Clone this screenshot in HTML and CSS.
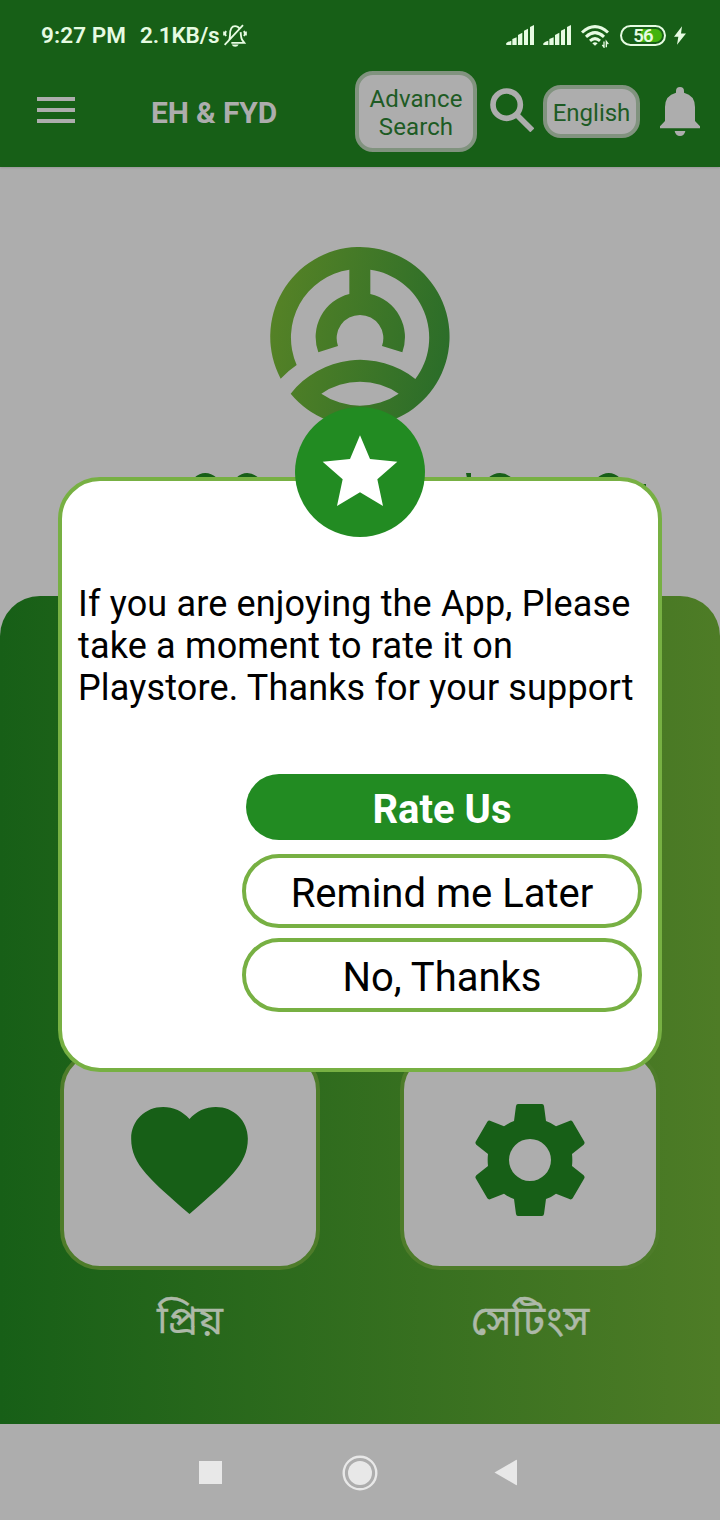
FILE: index.html
```html
<!DOCTYPE html>
<html lang="bn">
<head>
<meta charset="utf-8">
<title>EH &amp; FYD</title>
<link rel="stylesheet" href="styles.css">
</head>
<body>
<div class="screen">
  <header class="header">
    <div class="status">
      <span class="status-time">9:27 PM</span>
      <span class="status-speed">2.1KB/s</span>
      <svg class="icon-mute" viewBox="0 0 72 68" width="24" height="23" fill="none" stroke="currentColor" stroke-width="5.500">
        <path d="M15 52q6-6 6-19Q21 6 36 6q9 0 13 7M53 24q1 19 5 24l6 8H25M5 62 60 3"/>
        <path d="M9 20q-4 8 0 16M3 22v12M63 20q4 8 0 16M69 22v12" stroke-width="5"/>
        <path d="M26 61h21q-3 7-10.500 7T26 61Z" fill="currentColor" stroke="none"/>
      </svg>
      <span class="status-gap"></span>
      <svg class="icon-signal" viewBox="0 0 84 60" width="28" height="20" fill="currentColor"><path d="M0 58q0-6 16-11v13H2ZM19 42l13-5v23H19ZM36 30l13-7v37H36ZM54 17l12-6v49H54ZM72 6l12-6v60H72Z"/></svg>
      <svg class="icon-signal" viewBox="0 0 84 60" width="28" height="20" fill="currentColor"><path d="M0 58q0-6 16-11v13H2ZM19 42l13-5v23H19ZM36 30l13-7v37H36ZM54 17l12-6v49H54ZM72 6l12-6v60H72Z"/></svg>
      <svg class="icon-wifi" viewBox="0 0 84 68" width="28" height="23" fill="none" stroke="currentColor" stroke-width="9">
        <path d="M3 22Q42-13 81 22M15 35q27-25 54 0M27 47q15-13 30 0"/>
        <path d="M34 54q8-6 16 0l-8 8Z" fill="currentColor" stroke="none"/>
        <path d="M69 49v17l-5-7M76 66V49l6 8" stroke-width="4"/>
      </svg>
      <span class="battery"><span class="battery-level">56</span></span>
      <svg class="icon-bolt" viewBox="0 0 36 56" width="12" height="19" fill="currentColor"><path d="M24 0 0 32h13L9 56 36 22H21Z"/></svg>
    </div>
    <div class="toolbar">
      <svg class="icon-menu" viewBox="0 0 38 26" width="38" height="26" fill="currentColor"><path d="M0 0h38v4H0zM0 11h38v4H0zM0 22h38v4H0z"/></svg>
      <h1 class="title">EH &amp; FYD</h1>
      <div class="chip chip-search">Advance Search</div>
      <svg class="icon-search" viewBox="0 0 132 132" width="44" height="44" fill="none" stroke="currentColor"><circle cx="50" cy="50" r="41" stroke-width="17"/><path d="m80 80 47 47" stroke-width="17"/></svg>
      <div class="chip chip-lang">English</div>
      <svg class="icon-bell" viewBox="0 0 120 147" width="40" height="49" fill="currentColor"><path d="M60 0q12 0 12 12v5q33 8 33 43v42l15 16v6H0v-6l15-16V60q0-35 33-43v-5Q48 0 60 0ZM44 132h32q-3 15-16 15t-16-15Z"/></svg>
    </div>
  </header>

  <main class="content">
    <div class="hero">
      <svg class="logo" viewBox="60 50 540 540" width="180" height="180">
        <defs><linearGradient id="logoFill" x1="0" x2="1" y1=".4" y2=".6"><stop offset="0" stop-color="#558226"/><stop offset="1" stop-color="#2b6d29"/></linearGradient></defs>
        <path fill="url(#logoFill)" fill-rule="evenodd" d="M92 445A269 269 0 1 1 122 490A266 266 0 0 1 496 446A206 206 0 0 0 361 118V191A133 133 0 0 1 457 366L396 347A70 70 0 1 0 264 347L205 366A133 133 0 0 1 298 191V118A206 206 0 0 0 140 404Q116 420 92 445ZM214 490A205 205 0 0 1 446 490A205 205 0 0 1 214 490Z"/>
      </svg>
      <svg class="wordmark" viewBox="90 472 560 20" width="560" height="20" fill="#175f17"><path d="M194 478q11-10 23 0zM236 478q11-10 23 0zM466 473h5v5h-4zM488 478q12-10 24 0zM597 478q12-10 23 0zM642 484h4v4h-4z"/></svg>
    </div>
    <section class="panel">
      <div class="tile">
        <div class="card">
          <svg class="icon-heart" viewBox="395 172 350 321" width="117" height="107" fill="currentColor"><path d="M570 493C455 392 395 345 395 267C395 212 438 172 491 172C521 172 550 185 570 208C590 185 619 172 649 172C702 172 745 212 745 267C745 345 685 392 570 493Z"/></svg>
        </div>
        <p class="label">প্রিয়</p>
      </div>
      <div class="tile">
        <div class="card">
          <svg class="icon-gear" viewBox="-168 -168 336 336" width="112" height="112" fill="currentColor"><path fill-rule="evenodd" d="M-36-168H36Q41-168 42-162L48-117Q65-111 78-101L120-118Q125-119 128-115L163-55Q165-50 161-46L126-18Q128 0 126 18L161 46Q165 50 163 55L128 115Q125 119 120 118L78 101Q65 111 48 117L42 162Q41 168 36 168H-36Q-41 168-42 162L-48 117Q-65 111-78 101L-120 118Q-125 119-128 115L-163 55Q-165 50-161 46L-126 18Q-128 0-126-18L-161-46Q-165-50-163-55L-128-115Q-125-119-120-118L-78-101Q-65-111-48-117L-42-162Q-41-168-36-168ZM63 0A63 63 0 1 0-63 0A63 63 0 1 0 63 0Z"/></svg>
        </div>
        <p class="label label-settings">সেটিংস</p>
      </div>
    </section>
  </main>

  <nav class="navbar">
    <svg class="nav-recent" viewBox="0 0 23 23" width="23" height="23" fill="currentColor"><path d="M0 0h23v23H0z"/></svg>
    <svg class="nav-home" viewBox="0 0 36 36" width="36" height="36"><circle cx="18" cy="18" r="16.300" fill="none" stroke="currentColor" stroke-width="2.400"/><circle cx="18" cy="18" r="12" fill="currentColor"/></svg>
    <svg class="nav-back" viewBox="0 0 24 27" width="24" height="27" fill="currentColor"><path d="M.5 13.500 22 1q1-.5 1 .5v24q0 1-1 .5Z"/></svg>
  </nav>

  <div class="dialog">
    <svg class="badge" viewBox="0 0 390 390" width="130" height="130"><circle cx="195" cy="195" r="195" fill="#228b22"/><path fill="#fff" d="M195 85 225 156 307 164 247 217 264 297 195 256 126 297 143 217 83 164 165 156Z"/></svg>
    <p class="message">If you are enjoying the App, Please<br>take a moment to rate it on<br>Playstore. Thanks for your support</p>
    <div class="actions">
      <button class="action action-primary">Rate Us</button>
      <button class="action">Remind me Later</button>
      <button class="action">No, Thanks</button>
    </div>
  </div>
</div>
</body>
</html>
```
FILE: styles.css
```css
* { box-sizing: border-box; }
body { margin: 0; font-family: Roboto, "Noto Sans Bengali", "Noto Sans", sans-serif; }
svg { display: block; flex: none; }
h1, p { margin: 0; }

.screen { position: relative; display: flex; flex-direction: column; width: 720px; height: 1520px; overflow: hidden; background: #adadad; }

.header { height: 167px; background: #175f17; color: #adadad; box-shadow: 0 1px 2px rgba(0, 0, 0, .12); }
.status { display: flex; align-items: center; height: 70px; padding: 0 34px 0 41px; color: #e6fbe2; font-size: 22.500px; font-weight: 600; white-space: nowrap; }
.status-time { width: 99px; letter-spacing: .1px; }
.status-speed { width: 83px; letter-spacing: -.2px; }
.status-gap { flex: 1; }
.icon-signal { margin-right: 9px; }
.icon-wifi { margin: 2px 11px 0 1px; }
.battery { width: 46px; height: 21px; padding: 2px; margin-right: 8px; border: 2px solid #e6fbe2; border-radius: 11px; }
.battery-level { display: block; height: 13px; border-radius: 7px; background: linear-gradient(90deg, transparent 45%, #43b30e 45%); font-size: 18.500px; line-height: 14px; letter-spacing: -.8px; font-weight: 600; text-align: center; }

.toolbar { display: flex; align-items: center; height: 83px; padding-left: 37px; }
.icon-menu { margin-top: -3px; }
.title { width: 204px; margin: 2px 0 0 76px; font-size: 30px; line-height: 35px; font-weight: 700; letter-spacing: -.15px; white-space: nowrap; }
.chip { display: flex; align-items: center; justify-content: center; border: 4px solid #81937f; border-radius: 18px; background: #adadad; color: #1d5b24; font-size: 24px; line-height: 28px; text-align: center; }
.chip-search { width: 122px; height: 81px; padding-top: 2px; letter-spacing: .1px; }
.icon-search { margin: -3px 9px 0 13px; }
.chip-lang { width: 97px; height: 53px; padding-top: 3px; margin-right: 20px; }

.content { display: flex; flex-direction: column; height: 1257px; }
.hero { display: flex; flex-direction: column; gap: 45px; height: 429px; padding: 80px 0 0 90px; }
.logo { margin-left: 180px; }
.panel { display: flex; justify-content: center; gap: 80px; height: 828px; padding-top: 454px; border-radius: 40px 40px 0 0; background: linear-gradient(90deg, #175f17, #4e7c26); }
.tile { width: 260px; }
.card { display: flex; align-items: center; justify-content: center; height: 220px; border: 4px solid #4e7c2a; border-radius: 40px; background: #adadad; color: #175f17; }
.icon-heart { margin-left: -1px; }
.label { margin-top: 23px; color: #adb9a8; font-size: 40px; line-height: 56px; text-align: center; -webkit-text-stroke: .3px #adb9a8; }
.label-settings { font-size: 41.500px; }

.navbar { display: flex; align-items: center; height: 96px; padding: 0 0 0 199px; background: #adadad; color: #e8e8e8; }
.nav-recent, .nav-home, .nav-back { margin-top: 1px; }
.nav-home { margin-left: 119.500px; }
.nav-back { margin-left: 116px; }

.dialog { position: absolute; left: 58px; top: 477px; width: 604px; height: 595px; padding: 102px 16px 0; border: 4px solid #77b043; border-radius: 42px; background: #fff; color: #000; }
.badge { position: absolute; left: 233px; top: -74px; }
.message { font-size: 36px; line-height: 42px; letter-spacing: .16px; white-space: nowrap; }
.actions { display: flex; flex-direction: column; align-items: center; gap: 10px; width: 400px; margin: 61px 0 0 164px; }
.action { width: 400px; height: 74px; padding: 4px 0 0; border: 4px solid #77b043; border-radius: 37px; background: #fff; color: #000; font: 400 40px/47px Roboto, sans-serif; }
.action-primary { width: 392px; height: 66px; margin: 4px 0; border: 0; background: #228b22; color: #fff; font-weight: 700; }
```
